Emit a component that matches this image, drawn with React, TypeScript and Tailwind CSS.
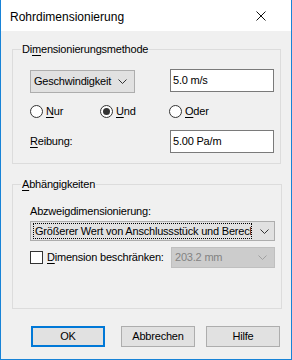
import type { ReactNode } from "react";

function Chevron({ color = "#333" }: { color?: string }) {
  return (
    <svg width="9" height="5" viewBox="0 0 9 5" className="shrink-0">
      <polyline points="0.5,0.5 4.5,4.5 8.5,0.5" fill="none" stroke={color} strokeWidth="1" />
    </svg>
  );
}

function Key({ k, rest }: { k: string; rest: string }) {
  return (
    <span className="whitespace-nowrap">
      <span className="underline underline-offset-2">{k}</span>
      {rest}
    </span>
  );
}

function Radio({ checked, label, className }: { checked?: boolean; label: ReactNode; className?: string }) {
  return (
    <label className={"flex items-center gap-[3px] " + (className ?? "")}>
      <span className="w-[13px] h-[13px] rounded-full border border-[#333] bg-white flex items-center justify-center">
        {checked && <span className="w-[7px] h-[7px] rounded-full bg-[#333]" />}
      </span>
      {label}
    </label>
  );
}

function GroupBox({ title, children, className }: { title: ReactNode; children: ReactNode; className?: string }) {
  return (
    <fieldset className={"border border-[#dcdcdc] pl-[17px] pr-[6px] " + (className ?? "")}>
      <legend className="-ml-[9px] px-[1px] leading-[16px]">{title}</legend>
      {children}
    </fieldset>
  );
}

export default function App() {
  return (
    <div
      className="w-[292px] h-[360px] flex flex-col border-x border-b border-[#1883d7] text-[11px] tracking-[-0.2px] text-black"
      style={{ fontFamily: '"Liberation Sans", Arial, sans-serif' }}
    >
      {/* Title bar */}
      <div className="h-[31px] bg-white flex items-center justify-between pl-[9px] pr-[25px] shrink-0 text-[12px] tracking-normal">
        <span className="leading-[16px] mt-[2px]">Rohrdimensionierung</span>
        <svg width="10" height="10" viewBox="0 0 10 10">
          <path d="M0.5 0.5 L9.5 9.5 M9.5 0.5 L0.5 9.5" stroke="#111" strokeWidth="1" />
        </svg>
      </div>

      {/* Body */}
      <div className="flex-1 bg-[#f0f0f0] pl-[11px] pr-[10px] pt-[10px] flex flex-col">
        <GroupBox title={<span>Di<span className="underline underline-offset-2">m</span>ensionierungsmethode</span>} className="pt-[12px] pb-[10px]">
          <div className="flex items-start justify-between">
            <div className="mt-[1px] w-[105px] h-[23px] bg-[#e1e1e1] border border-[#adadad] flex items-center justify-between pl-[3px] pr-[7px]">
              <span>Geschwindigkeit</span>
              <Chevron />
            </div>
            <div className="w-[104px] h-[23px] bg-white border border-[#7a7a7a] flex items-center pl-[2px]">5.0 m/s</div>
          </div>

          <div className="flex items-center mt-[12px] h-[13px]">
            <Radio label={<Key k="N" rest="ur" />} className="w-[70px]" />
            <Radio checked label={<Key k="U" rest="nd" />} className="w-[69px]" />
            <Radio label={<Key k="O" rest="der" />} />
          </div>

          <div className="flex items-center justify-between mt-[12px]">
            <Key k="R" rest="eibung:" />
            <div className="w-[104px] h-[23px] bg-white border border-[#7a7a7a] flex items-center pl-[2px]">5.00 Pa/m</div>
          </div>
        </GroupBox>

        <GroupBox title={<Key k="A" rest="bhängigkeiten" />} className="mt-[12px] pt-[11px] pb-[40px]">
          <div className="leading-[16px]">Abzweigdimensionierung:</div>
          <div className="mt-[2px] w-[245px] h-[20px] bg-[#e1e1e1] border border-[#adadad] flex items-center pl-[2px] pr-[5px] gap-[8px]">
            <div className="flex-1 min-w-0 h-[16px] border border-dotted border-black overflow-hidden whitespace-nowrap leading-[14px] pl-[1px]">
              Größerer Wert von Anschlussstück und Berechnung
            </div>
            <Chevron />
          </div>
          <div className="flex items-center justify-between mt-[6px]">
            <label className="flex items-center gap-[4px] whitespace-nowrap">
              <span className="w-[13px] h-[13px] border border-[#333] bg-white shrink-0" />
              <Key k="D" rest="imension beschränken:" />
            </label>
            <div className="w-[104px] h-[21px] shrink-0 bg-[#cccccc] border border-[#bfbfbf] flex items-center justify-between pl-[3px] pr-[7px] text-[#838383]">
              <span>203.2 mm</span>
              <Chevron color="#a0a0a0" />
            </div>
          </div>
        </GroupBox>

        <div className="flex mt-[17px] pl-[19px]">
          <button className="w-[74px] h-[21px] bg-[#e1e1e1] border-2 border-[#0078d7]">OK</button>
          <button className="ml-[16px] w-[74px] h-[21px] bg-[#e1e1e1] border border-[#adadad]">Abbrechen</button>
          <button className="ml-[11px] w-[74px] h-[21px] bg-[#e1e1e1] border border-[#adadad]">Hilfe</button>
        </div>
      </div>
    </div>
  );
}
